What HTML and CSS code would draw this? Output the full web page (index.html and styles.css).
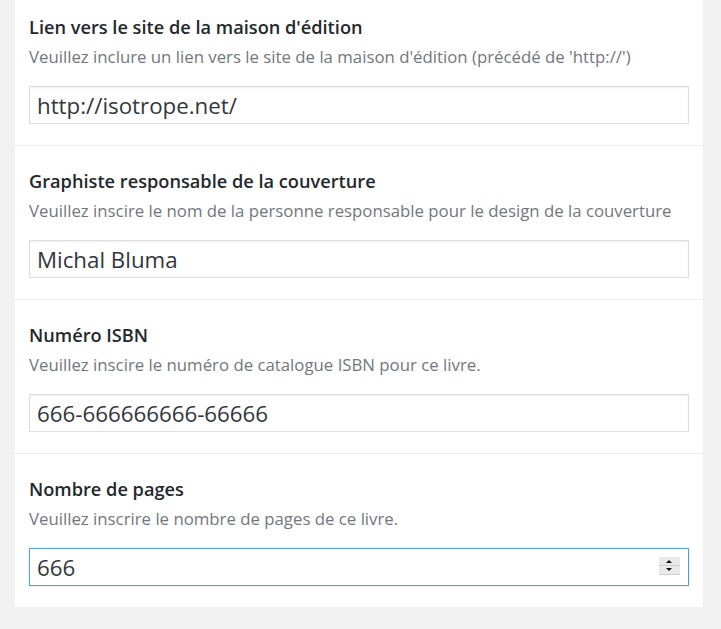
FILE: index.html
```html
<!DOCTYPE html>
<html lang="fr">
<head>
<meta charset="utf-8">
<link rel="stylesheet" href="styles.css">
</head>
<body>
<div class="panel">
  <div class="field">
    <div class="label">Lien vers le site de la maison d'édition</div>
    <div class="desc">Veuillez inclure un lien vers le site de la maison d'édition (précédé de 'http://')</div>
    <div class="input-wrap"><input class="input" type="text" value="http://isotrope.net/"></div>
  </div>
  <div class="field">
    <div class="label">Graphiste responsable de la couverture</div>
    <div class="desc">Veuillez inscire le nom de la personne responsable pour le design de la couverture</div>
    <div class="input-wrap"><input class="input" type="text" value="Michal Bluma"></div>
  </div>
  <div class="field">
    <div class="label">Numéro ISBN</div>
    <div class="desc">Veuillez inscire le numéro de catalogue ISBN pour ce livre.</div>
    <div class="input-wrap"><input class="input" type="text" value="666-666666666-66666"></div>
  </div>
  <div class="field">
    <div class="label">Nombre de pages</div>
    <div class="desc">Veuillez inscrire le nombre de pages de ce livre.</div>
    <div class="input-wrap">
      <input class="input focused" type="text" value="666">
      <span class="spinner"><span class="spin-up"></span><span class="spin-down"></span></span>
    </div>
  </div>
</div>
</body>
</html>
```

FILE: styles.css
```css
html, body {
  margin: 0;
  padding: 0;
  background: #f1f1f1;
  font-family: "Open Sans", "DejaVu Sans", sans-serif;
}
.panel {
  margin: -9px 0 0 15px;
  width: 688px;
  background: #fff;
  box-shadow: 0 1px 1px rgba(0,0,0,0.06);
}
.field {
  padding: 23px 14px 21px;
  border-top: 1px solid #eeeeee;
}
.label {
  font-size: 18.2px;
  font-weight: 600;
  line-height: 24px;
  color: #23282d;
}
.desc {
  margin-top: 7px;
  font-size: 16.8px;
  line-height: 22px;
  color: #72777c;
}
.input-wrap {
  position: relative;
  margin-top: 18px;
}
.input {
  display: block;
  box-sizing: border-box;
  width: 660px;
  height: 38px;
  margin: 0;
  padding: 0 7px;
  border: 1px solid #dddddd;
  box-shadow: inset 0 1px 2px rgba(0,0,0,0.07);
  background: #fff;
  font-family: "Open Sans", "DejaVu Sans", sans-serif;
  font-size: 22.3px;
  color: #32373c;
  outline: none;
}
.input.focused {
  border-color: #5b9dd9;
  box-shadow: 0 0 2px rgba(30,140,190,0.3);
}
.spinner {
  position: absolute;
  right: 9px;
  top: 9px;
  width: 21px;
  height: 18px;
  background: #e9e9e9;
  display: flex;
  flex-direction: column;
}
.spin-up, .spin-down {
  flex: 1;
  position: relative;
}
.spin-up {
  border-bottom: 1px solid #cfcfcf;
}
.spin-down {
  border-bottom: 1px solid #cfcfcf;
}
.spin-up::after, .spin-down::after {
  content: "";
  position: absolute;
  left: 7px;
  width: 0;
  height: 0;
  border-left: 3px solid transparent;
  border-right: 3px solid transparent;
}
.spin-up::after {
  top: 3px;
  border-bottom: 3px solid #111;
}
.spin-down::after {
  top: 2px;
  border-top: 3px solid #111;
}
```
